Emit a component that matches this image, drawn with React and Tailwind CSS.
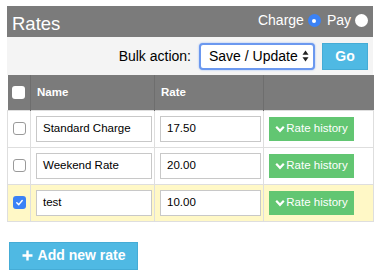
import React from 'react';

const rows = [
  { name: 'Standard Charge', rate: '17.50', checked: false },
  { name: 'Weekend Rate', rate: '20.00', checked: false },
  { name: 'test', rate: '10.00', checked: true },
];

// Small square checkbox, blue when ticked
const Box = ({ checked, header }) => (
  <span
    className={
      'inline-flex w-[13px] h-[13px] rounded-[3px] items-center justify-center ' +
      (checked
        ? 'bg-[#3b82f6]'
        : header
        ? 'bg-white'
        : 'bg-white border border-[#9a9a9a]')
    }
  >
    {checked && (
      <svg width="9" height="9" viewBox="0 0 10 10">
        <path d="M2 5.2 L4.2 7.4 L8 2.8" fill="none" stroke="white" strokeWidth="1.6" strokeLinecap="round" strokeLinejoin="round" />
      </svg>
    )}
  </span>
);

const App = () => (
  <div className="w-[383px] h-[279px] bg-white pl-[7px] pt-[6px] font-['Liberation_Sans',Arial,sans-serif]">
    <div className="w-[366px]">
      {/* Title bar */}
      <div className="h-[31px] bg-[#7b7b7b] flex justify-between items-start px-[5px] text-white">
        <span className="text-[18.5px] leading-none mt-[9px]">Rates</span>
        <div className="flex items-center gap-[4px] mt-[4px] text-[14px]">
          <span>Charge</span>
          <span className="w-[13px] h-[13px] rounded-full bg-[#3b82f6] flex items-center justify-center">
            <span className="w-[4px] h-[4px] rounded-full bg-white" />
          </span>
          <span className="ml-[2px]">Pay</span>
          <span className="w-[13px] h-[13px] rounded-full bg-white" />
        </div>
      </div>

      {/* Bulk action toolbar */}
      <div className="h-[38px] bg-[#f4f4f4] flex items-center justify-end pr-[5px] text-[14px] text-black">
        <span className="mr-[8px]">Bulk action:</span>
        <div className="w-[116px] h-[27px] bg-white border-2 border-[#6b98ef] rounded-[4px] flex items-center justify-between pl-[8px] pr-[4px] shadow-[0_0_2px_#8fb2f5]">
          <span>Save / Update</span>
          <svg width="7" height="12" viewBox="0 0 7 12">
            <path d="M3.5 0.5 L6.5 4.8 L0.5 4.8 Z" fill="#222" />
            <path d="M3.5 11.5 L6.5 7.2 L0.5 7.2 Z" fill="#222" />
          </svg>
        </div>
        <button className="ml-[7px] w-[46px] h-[27px] bg-[#4fb9e3] border border-[#45acd6] text-white font-bold text-[14px]">
          Go
        </button>
      </div>

      {/* Rates table */}
      <table className="w-[366px] border-collapse table-fixed text-[11.5px]">
        <colgroup>
          <col className="w-[23px]" />
          <col className="w-[124px]" />
          <col className="w-[109px]" />
          <col className="w-[110px]" />
        </colgroup>
        <thead>
          <tr className="h-[35px] bg-[#7b7b7b] text-white">
            <th className="border-r border-[#6e6e6e] text-center align-middle">
              <span className="flex justify-center"><Box header /></span>
            </th>
            <th className="border-r border-[#6e6e6e] text-left pl-[6px] font-bold">Name</th>
            <th className="border-r border-[#6e6e6e] text-left pl-[6px] font-bold">Rate</th>
            <th />
          </tr>
        </thead>
        <tbody>
          {rows.map((r) => (
            <tr
              key={r.name}
              className={'h-[37px] border border-[#dedede] ' + (r.checked ? 'bg-[#fff8c6]' : 'bg-white')}
            >
              <td className="border-r border-[#dedede]">
                <span className="flex justify-center"><Box checked={r.checked} /></span>
              </td>
              <td className="border-r border-[#dedede] pl-[5px]">
                <div className="w-[116px] h-[26px] border border-[#c8c8c8] bg-white text-[11.5px] text-black flex items-center pl-[6px]">
                  {r.name}
                </div>
              </td>
              <td className="border-r border-[#dedede] pl-[5px]">
                <div className="w-[101px] h-[26px] border border-[#c8c8c8] bg-white text-[11.5px] text-black flex items-center pl-[6px]">
                  {r.rate}
                </div>
              </td>
              <td className="pl-[5px]">
                <button className="w-[85px] h-[24px] bg-[#62c672] text-white text-[11.5px] flex items-center justify-center gap-[1px]">
                  <svg width="10" height="8" viewBox="0 0 10 8">
                    <path d="M1.2 1.8 L5 5.8 L8.8 1.8" fill="none" stroke="white" strokeWidth="2.2" />
                  </svg>
                  Rate history
                </button>
              </td>
            </tr>
          ))}
        </tbody>
      </table>

      {/* Add button */}
      <button className="mt-[20px] ml-[2px] w-[129px] h-[28px] bg-[#4fb9e3] border border-[#45acd6] text-white font-bold text-[14px] flex items-center justify-center gap-[5px]">
        <svg width="11" height="11" viewBox="0 0 11 11">
          <path d="M5.5 0.5 V10.5 M0.5 5.5 H10.5" stroke="white" strokeWidth="2.4" />
        </svg>
        Add new rate
      </button>
    </div>
  </div>
);

export default App;
